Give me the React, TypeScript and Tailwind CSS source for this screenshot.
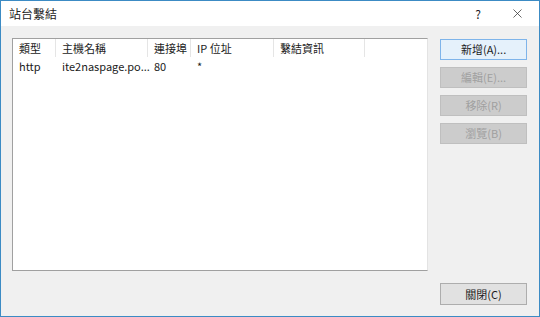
import { X } from 'lucide-react';

const font = { fontFamily: '"Noto Sans CJK TC", "Liberation Sans", sans-serif' };

const columns = [
  { label: '類型', width: 'w-[43px]' },
  { label: '主機名稱', width: 'w-[92px]' },
  { label: '連接埠', width: 'w-[43px]' },
  { label: 'IP 位址', width: 'w-[83px]' },
  { label: '繫結資訊', width: 'w-[91px]' },
];

const row = ['http', 'ite2naspage.po...', '80', '*', ''];

export default function App() {
  return (
    <div
      className="w-[540px] h-[317px] flex flex-col border border-[#3c8bc4] border-t-0 bg-[#f0f0f0] text-[11px] text-[#1b1b1b] overflow-hidden"
      style={font}
    >
      {/* Title bar */}
      <div className="h-[26px] bg-white flex items-center pl-[8px] pr-[14px] border-t border-[#3c8bc4]">
        <div className="text-[12px] text-[#222]">站台繫結</div>
        <div className="flex-1" />
        <div className="text-[12px] w-[20px] text-center mr-[22px]">?</div>
        <X size={15} strokeWidth={1.2} className="text-[#333]" />
      </div>

      {/* Body */}
      <div className="flex flex-1 pl-[11px] pr-[12px] pt-[12px] pb-[10px]">
        <div className="w-[417px] h-[233px] bg-white border border-[#a0a0a0] border-r-[#e3e3e3] border-b-[#a0a0a0] flex flex-col">
          <div className="flex h-[18px] items-center">
            {columns.map((c) => (
              <div
                key={c.label}
                className={`${c.width} h-full flex items-center pl-[6px] border-r border-[#e5e5e5]`}
              >
                {c.label}
              </div>
            ))}
          </div>
          <div className="flex h-[18px] items-center">
            {row.map((v, i) => (
              <div key={i} className={`${columns[i].width} pl-[6px] whitespace-nowrap`}>
                {v}
              </div>
            ))}
          </div>
        </div>

        <div className="ml-[12px] flex flex-col w-[87px] pt-[1px]">
          <div className="h-[21px] border border-[#7eb4ea] bg-[#e5f1fb] flex items-center justify-center">
            新增(A)...
          </div>
          <div className="h-[21px] mt-[7px] border border-[#bfbfbf] bg-[#cccccc] text-[#a0a0a0] flex items-center justify-center">
            編輯(E)...
          </div>
          <div className="h-[21px] mt-[7px] border border-[#bfbfbf] bg-[#cccccc] text-[#a0a0a0] flex items-center justify-center">
            移除(R)
          </div>
          <div className="h-[21px] mt-[7px] border border-[#bfbfbf] bg-[#cccccc] text-[#a0a0a0] flex items-center justify-center">
            瀏覽(B)
          </div>
          <div className="flex-1" />
          <div className="h-[22px] mb-[1px] border border-[#adadad] bg-[#e1e1e1] flex items-center justify-center">
            關閉(C)
          </div>
        </div>
      </div>
    </div>
  );
}
